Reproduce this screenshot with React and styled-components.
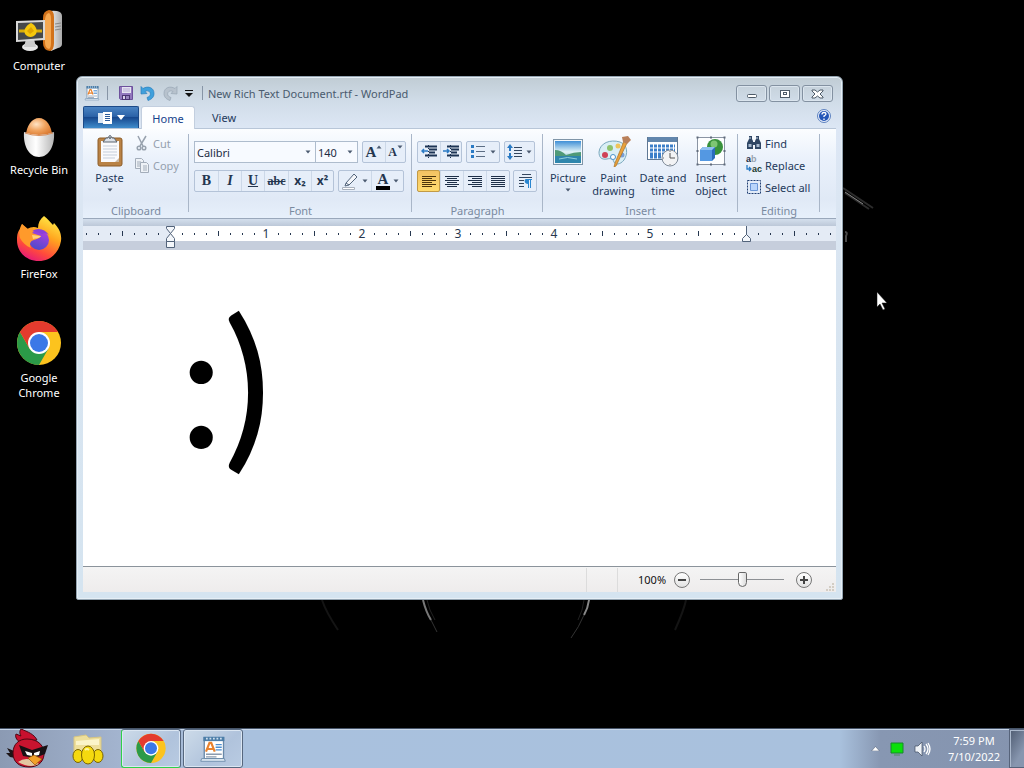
import React from "react";
import styled, { createGlobalStyle, css } from "styled-components";

const GlobalStyle = createGlobalStyle`
  * { box-sizing: border-box; }
  body {
    margin: 0;
    background: #000;
    font-family: "Noto Sans", "Open Sans", sans-serif;
    font-size: 11px;
    line-height: 13px;
    color: #1e395b;
  }
  button, input, select { font: inherit; color: inherit; margin: 0; }
  button { padding: 0; border: 0; background: none; }
`;

/* ---------- desktop ---------- */

const Screen = styled.div`
  min-height: 100vh;
  display: grid;
  grid-template-rows: 1fr auto;
  background: #000;
`;

const Desktop = styled.main`
  position: relative;
  overflow: hidden;
`;

const Wallpaper = styled.svg`
  position: absolute;
  left: 0;
  top: 0;
  width: 100%;
  height: 100%;
`;

const Shortcuts = styled.nav`
  position: relative;
  display: flex;
  flex-direction: column;
  width: 78px;
`;

const Shortcut = styled.a`
  height: 104px;
  padding-top: 8px;
  display: flex;
  flex-direction: column;
  align-items: center;
  gap: 2px;
  color: #fff;
  line-height: 15px;
  text-align: center;
  text-decoration: none;
`;

const Pointer = styled.svg`
  position: absolute;
  left: 876px;
  top: 291px;
`;

/* ---------- window frame ---------- */

const AppWindow = styled.section`
  position: absolute;
  left: 76px;
  top: 76px;
  width: calc(100% - 257px);
  height: calc(100% - 204px);
  padding: 0 6px 7px;
  display: flex;
  flex-direction: column;
  border: 1px solid #93a3b0;
  border-radius: 6px 6px 2px 2px;
  background: linear-gradient(#c0ccd4, #d0dce8 24px, #dde7f5 52px, #d9e5f1 200px, #d5e4f0);
  box-shadow: inset 0 0 0 1px #e6eff6;
`;

const TitleBar = styled.header`
  height: 29px;
  flex: none;
  padding: 6px 3px 0 1px;
  display: flex;
  align-items: flex-start;
`;

const QuickAccess = styled.div`
  height: 20px;
  display: flex;
  align-items: center;
`;

const QuickButton = styled.button`
  width: ${(p) => p.$w || 22}px;
  height: 20px;
  display: flex;
  align-items: center;
  justify-content: center;
`;

const Rule = styled.span`
  width: 1px;
  height: 14px;
  margin: 0 ${(p) => p.$gap}px;
  background: #8795a6;
`;

const Title = styled.h1`
  margin: 0;
  flex: 1;
  font-size: 11px;
  font-weight: 400;
  line-height: 22px;
  color: #4a5b6e;
`;

const Caption = styled.div`
  display: flex;
  gap: 2px;
  padding-top: 2px;
`;

const CaptionButton = styled.button`
  width: 31px;
  height: 17px;
  display: flex;
  align-items: center;
  justify-content: center;
  border: 1px solid #8391a1;
  border-radius: 3px;
  box-shadow: inset 0 0 0 1px #dbe5ee;
`;

const TabBar = styled.div`
  height: 22px;
  flex: none;
  display: flex;
  align-items: stretch;
`;

const FileButton = styled.button`
  width: 56px;
  display: flex;
  align-items: center;
  justify-content: center;
  gap: 5px;
  border: 1px solid #1c4a88;
  border-bottom: 0;
  border-radius: 2px 2px 0 0;
  background: linear-gradient(#4a83c2, #2c63a8 45%, #17488e 50%, #3f8ccc);
`;

const Tab = styled.button`
  width: 54px;
  margin-left: 2px;
  line-height: 21px;
  ${(p) =>
    p.$active &&
    css`
      position: relative;
      z-index: 1;
      margin-bottom: -1px;
      border: 1px solid #c3cfdf;
      border-bottom: 0;
      border-radius: 3px 3px 0 0;
      background: #fdfeff;
      color: #15428b;
    `}
`;

const HelpButton = styled.button`
  margin: 3px 5px 0 auto;
  align-self: flex-start;
  height: 15px;
`;

/* ---------- ribbon ---------- */

const Ribbon = styled.div`
  height: 91px;
  flex: none;
  display: flex;
  border-top: 1px solid #b8c6d8;
  border-bottom: 1px solid #9aa8bb;
  background: linear-gradient(#fbfdff, #eaf1fb 30px, #e0e9f6 70px, #e7f0fb);
`;

const Group = styled.section`
  width: ${(p) => p.$w}px;
  flex: none;
  padding-top: 3px;
  display: flex;
  flex-direction: column;
  justify-content: space-between;
  background: linear-gradient(#a9b6c8, #a9b6c8) right 5px / 1px 78px no-repeat;
`;

const GroupBody = styled.div`
  display: flex;
  padding: ${(p) => p.$pad || "0 4px"};
  flex-direction: ${(p) => (p.$stack ? "column" : "row")};
  gap: ${(p) => p.$gap || 0}px;
`;

const GroupName = styled.h2`
  margin: 0;
  font-size: 11px;
  font-weight: 400;
  line-height: 15px;
  text-align: center;
  color: #7a8aa0;
`;

const BigButton = styled.button`
  width: ${(p) => p.$w}px;
  flex: none;
  padding-top: 3px;
  display: flex;
  flex-direction: column;
  align-items: center;
  white-space: nowrap;

  > svg:first-child { margin-bottom: 4px; }
  > svg:last-child { margin-top: 4px; }
`;

const SmallButton = styled.button`
  height: 22px;
  display: flex;
  align-items: center;
  gap: 3px;
  white-space: nowrap;

  &:disabled { color: #94a0ae; }
`;

const Row = styled.div`
  display: flex;
  gap: ${(p) => p.$gap}px;
`;

const ComboPair = styled.div`
  display: flex;
  width: 164px;
`;

const Combo = styled.label`
  position: relative;
  width: ${(p) => p.$w}px;
  height: 22px;
  margin-right: ${(p) => (p.$joined ? -1 : 0)}px;

  > svg {
    position: absolute;
    right: 5px;
    top: 9px;
    pointer-events: none;
  }
`;

const Select = styled.select`
  width: 100%;
  height: 100%;
  padding: 0 2px;
  appearance: none;
  border: 1px solid #aebccd;
  border-radius: 0;
  background: #f7faff;
  color: #1c2c44;
`;

const ToolGroup = styled.div`
  height: 22px;
  display: flex;
  border: 1px solid #b4c3d8;
  border-radius: 2px;
  background: #e6eef9;
`;

const Tool = styled.button`
  width: ${(p) => p.$w || 24}px;
  height: 20px;
  display: flex;
  align-items: center;
  justify-content: center;
  gap: ${(p) => (p.$tight ? 0 : 3)}px;
  & + & { border-left: 1px solid #ccd8e8; }
  ${(p) =>
    p.$tight &&
    css`
      > svg { align-self: flex-start; margin-top: 3px; }
    `}
  ${(p) =>
    p.$on &&
    css`
      height: 22px;
      margin: -1px 0 -1px -1px;
      border: 1px solid #c29a45;
      border-radius: 2px;
      background: linear-gradient(#f3c263, #ffdb6e);
    `}
`;

const Glyph = styled.span`
  font-family: "Liberation Serif", serif;
  font-size: ${(p) => p.$size || 14}px;
  line-height: ${(p) => (p.$bar ? 13 : 18)}px;
  font-weight: 700;
  font-style: ${(p) => (p.$italic ? "italic" : "normal")};
  text-decoration: ${(p) => p.$line || "none"};
  color: #24364f;
  ${(p) =>
    p.$sans &&
    css`
      font-family: "Noto Sans", sans-serif;
    `}
  ${(p) =>
    p.$bar &&
    css`
      padding: 0 2px;
      border-bottom: 4px solid #000;
    `}
`;

/* ---------- document ---------- */

const RulerStrip = styled.div`
  height: 31px;
  flex: none;
  padding-top: 7px;
  background: linear-gradient(#d4dfed, #bcc8d8 7px);
`;

const RulerDrawing = styled.svg`
  display: block;
  width: 100%;
  height: 24px;
  font-size: 12px;
`;

const Page = styled.article`
  flex: 1;
  min-height: 0;
  overflow: hidden;
  padding: 16px 96px;
  background: #fff;
  color: #000;
`;

const Paragraph = styled.p`
  margin: 0;
  font-family: Lato, sans-serif;
  font-weight: 500;
  font-size: 176px;
  line-height: 228px;
`;

const StatusBar = styled.footer`
  height: 26px;
  flex: none;
  display: flex;
  align-items: center;
  justify-content: flex-end;
  border-top: 1px solid #8b939b;
  background: linear-gradient(#f4f4f4, #eeecec);
  color: #111;
`;

const StatusCell = styled.div`
  width: 32px;
  height: 24px;
  border: solid #dcdcdc;
  border-width: 0 1px;
`;

const Zoom = styled.div`
  width: 218px;
  padding-left: 20px;
  display: flex;
  align-items: center;
`;

const ZoomValue = styled.output`
  width: 36px;
`;

const RoundButton = styled.button`
  width: 16px;
  height: 16px;
  display: flex;
  align-items: center;
  justify-content: center;
  border: 1px solid #777;
  border-radius: 50%;
  background: linear-gradient(#fff, #e2e2e2);
`;

const Slider = styled.input`
  width: 84px;
  height: 18px;
  margin: 0 12px 0 10px;
  appearance: none;
  background: none;

  &::-webkit-slider-runnable-track {
    height: 1px;
    background: #8d9094;
  }
  &::-webkit-slider-thumb {
    appearance: none;
    width: 9px;
    height: 15px;
    margin-top: -7px;
    border: 1px solid #666;
    border-radius: 2px 2px 5px 5px;
    background: linear-gradient(90deg, #fff, #dcdcdc);
  }
`;

const Grip = styled.svg`
  margin: 14px 2px 0 auto;
`;

/* ---------- taskbar ---------- */

const Taskbar = styled.footer`
  height: 40px;
  position: relative;
  display: flex;
  align-items: stretch;
  border-top: 1px solid #465468;
  background: linear-gradient(90deg, #8b9ab3, #a3b4cf 120px, #a9c1de 240px, #a9c1dd 82%, #8797b2 86%, #8594af);
  box-shadow: inset 0 1px 0 #c6d5e8;
`;

const TaskButton = styled.button`
  width: ${(p) => p.$w || 60}px;
  display: flex;
  align-items: center;
  justify-content: center;
  ${(p) =>
    p.$running &&
    css`
      margin: 0 2px 0 0;
      border: 1px solid #56677e;
      border-radius: 3px;
      box-shadow: inset 0 0 0 1px #dbe6f2;
      background: linear-gradient(135deg, #cddbe9, #b0c3dc 60%, #b9cbe2);
    `}
  ${(p) =>
    p.$accent &&
    css`
      border-left-color: ${p.$accent};
      border-bottom-color: ${p.$accent};
    `}
`;

const Tray = styled.div`
  margin-left: auto;
  display: flex;
  align-items: center;
  gap: 10px;
  color: #fff;
`;

const Clock = styled.time`
  width: 66px;
  text-align: center;
  line-height: 16px;
`;

const ShowDesktop = styled.button`
  width: 15px;
  height: 39px;
  margin-left: -8px;
  border: 1px solid #56637a;
  border-right: 0;
  box-shadow: inset 1px 1px 0 #aab8cc;
  background: linear-gradient(120deg, #4f5c72, #8796af 70%);
`;

/* ---------- drawings ---------- */

const Caret = ({ up }) => (
  <svg width="6" height="4" viewBox="0 0 6 4"><path d={up ? "M0.500 3.500h5L3 .5z" : "M0.500 0.500h5L3 3.500z"} fill="#4b5a70" /></svg>
);

const ComputerIcon = () => (
  <svg width="48" height="48" viewBox="0 0 48 48">
    <defs>
      <linearGradient id="tower"><stop offset="0" stopColor="#fafafa" /><stop offset="1" stopColor="#aaa" /></linearGradient>
    </defs>
    <path d="M33 4 Q36 2 42 3 Q47 4 47 8V36q0 3-4 4l-7 3z" fill="url(#tower)" />
    <path d="M28 10q0-7 6-8 5 0 5 7v26q0 7-4 8-7-1-7-8z" fill="#d2721a" />
    <path d="M30 11q1-6 4-6 2 1 2 6v24q0 5-2 6-4-1-4-7z" fill="#f5a850" />
    <path d="M40 16l6-1M40 19l6-1M40 22l6-1" stroke="#888" />
    <ellipse cx="15" cy="39" rx="8" ry="4" fill="#e8e8e8" />
    <path d="M11 31h8l2 8H9z" fill="#ccc" />
    <path d="M1 13l29 -1v20L1 34z" fill="#d9d9d9" />
    <path d="M3 15l25-1v16L3 32z" fill="#45484a" />
    <path d="M4 23h23" stroke="#d9ae0a" strokeWidth="3" />
    <path d="M16 15c4 2 7 6 5 11-3 4-8 4-11 0-2-5 2-9 6-11z" fill="#f5c70c" />
    <path d="M12 23l4-4 3 4-4 3z" fill="#e0a500" />
  </svg>
);

const RecycleIcon = () => (
  <svg width="48" height="48" viewBox="0 0 48 48">
    <defs>
      <radialGradient id="egg" cx="0.4" cy="0.35" r="0.7"><stop offset="0" stopColor="#ffe3c4" /><stop offset="0.5" stopColor="#f0a35f" /><stop offset="1" stopColor="#d9762c" /></radialGradient>
      <linearGradient id="cup"><stop offset="0" stopColor="#ddd" /><stop offset="0.4" stopColor="#fff" /><stop offset="1" stopColor="#b5b5b5" /></linearGradient>
    </defs>
    <path d="M11 24c0-10 6-18 13-18s13 8 13 18z" fill="url(#egg)" />
    <path d="M9 20q15 6 30 0c1 14-5 25-15 25S8 34 9 20z" fill="url(#cup)" />
    <path d="M10 21q14 5 28 0" stroke="#d98f5d" fill="none" />
  </svg>
);

const FirefoxIcon = () => (
  <svg width="48" height="48" viewBox="0 0 48 48">
    <defs>
      <linearGradient id="fox" x1="0.8" y1="0" x2="0.3" y2="1"><stop offset="0" stopColor="#fff04a" /><stop offset="0.4" stopColor="#ffa51f" /><stop offset="0.75" stopColor="#ff4a3c" /><stop offset="1" stopColor="#e5197a" /></linearGradient>
      <linearGradient id="globe" x1="0.7" y1="0" x2="0.3" y2="1"><stop offset="0" stopColor="#b13fe0" /><stop offset="1" stopColor="#4a4bc9" /></linearGradient>
    </defs>
    <path d="M29 0c4 3 6 6 9 9l1-2c5 5 8 11 7 18-2 12-11 20-22 20C11 45 2 36 2 24c0-6 1-9 4-12l1-4 5 5c4-2 7-3 11-1 0-5 2-9 6-12z" fill="url(#fox)" />
    <circle cx="24" cy="24" r="10" fill="url(#globe)" />
    <path d="M17 15c6-4 13-2 17 4-3-2-5-2-7-1z" fill="#8b3fd9" />
    <path d="M7 8l6 5 5-1-1 5 9 3c-2 3-5 3-7 4-4 1-5 4-3 8-5-2-9-6-11-10-1-5-1-9 2-14z" fill="#ff9a2b" />
    <path d="M17 19l9 1c-2 3-5 2-8 3z" fill="#ffd27a" />
  </svg>
);

const ChromeIcon = ({ size = 48 }) => (
  <svg width={size} height={size} viewBox="0 0 48 48">
    <circle cx="24" cy="23" r="22" fill="#fcc31e" />
    <path d="M24 23 5 12A22 22 0 0 1 43 12H24z" fill="#e33b2e" />
    <path d="M5 12A22 22 0 0 0 24 45L33.500 28.500 24 33 14.500 28.500z" fill="#2b9a48" />
    <path d="M5 12 14.500 28.500 24 23 24 12z" fill="#e33b2e" />
    <circle cx="24" cy="23" r="11" fill="#fff" />
    <circle cx="24" cy="23" r="9" fill="#3b78e7" />
  </svg>
);

const WordPadIcon = ({ size = 16 }) => (
  <svg width={size} height={size} viewBox="0 0 32 32">
    <path d="M6 3h22v24H6z" fill="#fff" stroke="#6888a8" strokeWidth="1.500" />
    <path d="M5 2h24v5H5z" fill="#4d7ea8" />
    <path d="M8 4h2m2 0h2m2 0h2m2 0h2m2 0h2" stroke="#cfe0ee" strokeWidth="2" />
    <path d="M8 19l4-10h2l4 10M10 16h6" stroke="#e8822e" strokeWidth="2.500" fill="none" />
    <path d="M19 11h7M19 14h7M19 17h7" stroke="#4d8fd0" strokeWidth="1.500" />
    <path d="M8 22h18M8 25h12" stroke="#8a9aae" strokeWidth="1.500" />
    <path d="M3 27h26l1 3H2z" fill="#e3edf6" stroke="#6888a8" />
  </svg>
);

const SaveIcon = () => (
  <svg width="16" height="16" viewBox="0 0 16 16">
    <path d="M1.500 1.500h13v13h-12l-1-1z" fill="#9277bd" stroke="#6d519c" />
    <path d="M4 2h9v6H4z" fill="#e6e3f2" /><path d="M5 4h7M5 6h7" stroke="#b5aad2" />
    <path d="M4 10h8v5H4z" fill="#4b3472" /><path d="M5 11h2v3H5z" fill="#d8cfe9" /><path d="M8 11h3v3H8z" fill="#9883bd" />
  </svg>
);

const UndoIcon = ({ color = "#3fa0dc", edge = "#2b7fbd", flip }) => (
  <svg width="16" height="16" viewBox="0 0 16 16">
    <g transform={flip ? "matrix(-1 0 0 1 16 0)" : undefined}>
      <path d="M1 1.500l2 2c5-3 11-1 11 5 0 4-3 6-6 7l-1-3c3-1 4-3 3-5-1-2-3-2-5-1l2 2-6 .5z" fill={color} stroke={edge} strokeWidth="0.700" />
    </g>
  </svg>
);

const ClipboardIcon = () => (
  <svg width="26" height="32" viewBox="0 0 26 32">
    <rect x="1" y="3" width="24" height="28" rx="2" fill="#b98245" stroke="#8d5d28" />
    <path d="M4 6h18v21H4z" fill="#fafafc" /><path d="M18 27l4-4v4z" fill="#c9b8a3" />
    <path d="M6 11h14M6 14h14M6 17h14M6 20h14M6 23h12" stroke="#c5cedb" />
    <path d="M6 7l3-4h2q2-5 4 0h2l3 4z" fill="#dce1e8" stroke="#59636f" />
    <circle cx="13" cy="3" r="1" fill="#59636f" />
  </svg>
);

const CutIcon = () => (
  <svg width="16" height="16" viewBox="0 0 16 16" fill="none" stroke="#98a2ae" strokeWidth="1.500">
    <path d="M4 1l5 10M12 1L6 11" /><circle cx="5" cy="13" r="1.800" /><circle cx="10" cy="13" r="1.800" />
  </svg>
);

const CopyIcon = () => (
  <svg width="16" height="16" viewBox="0 0 16 16" fill="#eef2f7" stroke="#a3adba">
    <path d="M1.500 1.500h6l2 2v8h-8z" /><path d="M3 5h4M3 7h3M3 9h3" />
    <path d="M6.500 5.500h6l2 2v8h-8z" /><path d="M9 9h4M9 11h4M9 13h4" />
  </svg>
);

const IndentIcon = ({ right }) => (
  <svg width="17" height="16" viewBox="0 0 17 16" stroke="#1d3455" strokeWidth="1.500">
    <path d="M4 2.500h12M8 5.500h8M8 8.500h6M4 11.500h12" strokeWidth="2" /><path d="M7.500 1v14" strokeDasharray="1 2" strokeWidth="1" />
    <path d={right ? "M0 7h6M4 5l2 2-2 2" : "M1 7h6M3 5l-2 2 2 2"} fill="none" stroke="#2a7ac4" />
  </svg>
);

const ListIcon = () => (
  <svg width="16" height="16" viewBox="0 0 16 16">
    <path d="M0 1h3v3H0zM0 6h3v3H0zM0 11h3v3H0z" fill="#2a7ac4" /><path d="M5 2.500h9M5 7.500h9M5 12.500h9" stroke="#5b6d84" />
  </svg>
);

const SpacingIcon = () => (
  <svg width="16" height="16" viewBox="0 0 16 16">
    <path d="M3 0L0 4h2v3h2V4h2zM3 16l-3-4h2V9h2v3h2z" fill="#2a7ac4" /><path d="M7 3.500h8M7 6.500h8M7 9.500h8M7 12.500h8" stroke="#34475f" />
  </svg>
);

const alignRows = {
  left: "M1 2.500h14M1 4.500h10M1 6.500h14M1 8.500h10M1 10.500h14M1 12.500h10",
  center: "M1 2.500h14M3 4.500h10M1 6.500h14M3 8.500h10M1 10.500h14M3 12.500h10",
  right: "M1 2.500h14M5 4.500h10M1 6.500h14M5 8.500h10M1 10.500h14M5 12.500h10",
  justify: "M1 2.500h14M1 4.500h14M1 6.500h14M1 8.500h14M1 10.500h14M1 12.500h14",
};
const AlignIcon = ({ kind }) => (
  <svg width="16" height="15" viewBox="0 0 16 15"><path d={alignRows[kind]} stroke={kind === "left" ? "#4d350b" : "#1d2f48"} /></svg>
);

const ParagraphIcon = () => (
  <svg width="16" height="16" viewBox="0 0 16 16">
    <path d="M5 1.500h9M2 4.500h13M2 7.500h5M2 10.500h5M2 13.500h5" stroke="#34475f" />
    <path d="M9 6h6v1h-1v8h-1V7h-1v8h-1v-4c-4 0-4-5-2-5z" fill="#2a86d0" />
  </svg>
);

const HighlightIcon = () => (
  <svg width="17" height="17" viewBox="0 0 17 17" fill="#f4f6fa" stroke="#53657b">
    <path d="M4 10L12 1l3 3-8 8-4 1z" /><path d="M4 10l3 2" /><path d="M0.500 14.500h12v2H.5z" fill="#fff" stroke="#a9b1bd" />
  </svg>
);

const PictureIcon = () => (
  <svg width="30" height="32" viewBox="0 0 30 32">
    <defs><linearGradient id="sky" x2="0" y2="1"><stop offset="0" stopColor="#3f8fd6" /><stop offset="0.500" stopColor="#e2f4f7" /><stop offset="1" stopColor="#2e86ae" /></linearGradient></defs>
    <rect x="0.500" y="4.500" width="29" height="25" fill="#f4f8fb" stroke="#7f95a8" />
    <path d="M2 6h26v22H2z" fill="url(#sky)" />
    <path d="M2 15q6 0 11 5 8-3 15-3v5H2z" fill="#4f9a78" /><path d="M2 21h26v7H2z" fill="#2f86ac" /><path d="M6 24q8-3 18 0" stroke="#8fd0e0" fill="none" />
  </svg>
);

const PaintIcon = () => (
  <svg width="34" height="32" viewBox="0 0 34 32">
    <path d="M2 17C3 8 13 4 23 7c8 3 8 12 4 18-4 5-9 5-10 2s-3-4-7-3c-6 1-8-2-8-7z" fill="#d9eef5" stroke="#7aa8bd" />
    <circle cx="8" cy="20" r="3" fill="#cf4257" /><circle cx="13" cy="13" r="3" fill="#8ec26c" /><circle cx="21" cy="11" r="2.500" fill="#efc45a" /><circle cx="16" cy="22" r="2.500" fill="#fff" stroke="#4a92c9" /><circle cx="25" cy="20" r="2.500" fill="#7a9fd5" />
    <path d="M27 6l3 2-11 23-2 1 1-4z" fill="#e9a13c" stroke="#a9701f" strokeWidth="0.700" /><path d="M25 2l6-1 3 4-4 4-4-2z" fill="#b9805a" />
  </svg>
);

const CalendarIcon = () => (
  <svg width="32" height="32" viewBox="0 0 32 32">
    <rect x="0.500" y="2.500" width="30" height="22" fill="#fff" stroke="#5f7894" />
    <path d="M1 2h29v5H1z" fill="#6186ad" />
    <path d="M3 11h25M3 15h25M3 19h18M3 22h14" stroke="#3c7fc9" strokeWidth="3" strokeDasharray="3 1" />
    <circle cx="23" cy="23" r="8" fill="#f2f3f5" stroke="#7f8b99" /><path d="M23 18v5h5" stroke="#555" fill="none" /><path d="M23 16v1M23 29v1M16 23h1" stroke="#777" />
  </svg>
);

const ObjectIcon = () => (
  <svg width="32" height="32" viewBox="0 0 32 32">
    <path d="M2.500 2.500h27v27h-27z" fill="#fdfeff" stroke="#8a94a3" />
    <circle cx="20" cy="12" r="8" fill="#38913b" /><circle cx="19" cy="9" r="3.500" fill="#7ec673" />
    <path d="M5 15l3-3h12v11l-3 3H5z" fill="#2a6cbd" /><path d="M5 15h12v11H5z" fill="#5498e2" /><path d="M5 15l3-3h12l-3 3z" fill="#8fc0f1" />
    <path d="M1.500 1.500h2v2h-2zM28.500 1.500h2v2h-2zM1.500 28.500h2v2h-2zM28.500 28.500h2v2h-2zM15 1.500h2v2h-2zM1.500 15h2v2h-2zM28.500 15h2v2h-2zM15 28.500h2v2h-2z" fill="#606b7b" />
  </svg>
);

const FindIcon = () => (
  <svg width="16" height="16" viewBox="0 0 16 16">
    <path d="M3 1h3v3l1 2v8H1V8l2-4zM10 1h3v3l2 4v6H9V6l1-2zM6 7h4v3H6z" fill="#2f4664" />
    <path d="M2.500 9h3v3h-3zM10.500 9h3v3h-3z" fill="#a8bad0" /><path d="M4 2v2M11 2v2" stroke="#cdd8e6" />
  </svg>
);

const ReplaceArt = styled.svg`
  overflow: visible;
  font: 700 9px "Liberation Sans", sans-serif;
`;

const ReplaceIcon = () => (
  <ReplaceArt width="16" height="16" viewBox="0 0 16 16">
    <text x="0" y="5" fill="#1d2f48">a<tspan fill="#98a2ae">b</tspan></text>
    <text x="6" y="15" fill="#1d3b2f">ac</text>
    <path d="M1 8v4h4M3 10l2 2-2 2" fill="none" stroke="#2a7ac4" strokeWidth="1.300" />
  </ReplaceArt>
);

const SelectAllIcon = () => (
  <svg width="16" height="16" viewBox="0 0 16 16">
    <path d="M1.500 1.500h13v13h-13z" fill="none" stroke="#203f72" strokeDasharray="2 1" />
    <path d="M4.500 4.500h7v7h-7z" fill="#b9d5fb" stroke="#6a96d6" />
  </svg>
);

const BirdIcon = () => (
  <svg width="44" height="40" viewBox="0 0 44 40">
    <path d="M14 13C10 11 9 7 10 5l5 2C13 4 14 1 15 0c7 3 13 5 16 11z" fill="#c8102e" stroke="#4d0611" />
    <path d="M8 22l-7-3 3 5-4 0 4 4 5 1z" fill="#1d1416" />
    <path d="M7 24c0-9 6-14 14-14 12 0 18 8 17 16-1 8-7 12-15 12C13 38 7 33 7 24z" fill="#c9142f" stroke="#4d0611" />
    <path d="M12 33q9-7 21 2-9 5-21-2z" fill="#e3c7a1" />
    <path d="M13 16l13 5 16-5-3 9-10 4-12-2z" fill="#181114" />
    <path d="M19 22l7 2v3l-5-1zM28 24l6-2-1 4-5 1z" fill="#fff" />
    <path d="M22 29l6-3 8 4-7 6z" fill="#f2a12a" stroke="#8d4e08" strokeWidth="0.700" />
  </svg>
);

const EggFolderIcon = () => (
  <svg width="32" height="32" viewBox="0 0 32 32">
    <path d="M2 4l12-2 3 3 12-1v22H2z" fill="#eedf9b" stroke="#d8c682" /><path d="M4 8l23-2v6H4z" fill="#fbf4c9" />
    <g fill="#f5d90f" stroke="#7a6300"><ellipse cx="6" cy="23" rx="5" ry="6.500" /><ellipse cx="26" cy="23" rx="5" ry="6.500" /><ellipse cx="16" cy="22" rx="6.500" ry="9" /></g>
    <path d="M13 17q2-2 4 0" stroke="#fff7a0" strokeWidth="2" fill="none" />
  </svg>
);

const SpeakerIcon = () => (
  <svg width="17" height="16" viewBox="0 0 17 16" fill="none" stroke="#fff">
    <path d="M1 5h3l4-4v14l-4-4H1z" fill="#eef2f7" stroke="#3d4a5e" strokeWidth="0.700" /><path d="M10 5q2 3 0 6M12 3q4 5 0 10M14 2q4 6 0 12" strokeWidth="1.300" />
  </svg>
);

/* The ruler counts inches of 96px from the left margin marker at x=87. */
const Ruler = () => {
  const ticks = [];
  for (let i = -7; i < 120; i += 1) {
    if (i === 0 || (i % 8 === 0 && i < 48) || i === 48) continue;
    ticks.push(
      <rect key={i} x={87 + i * 12} y={i % 4 ? 7 : 5} width="1" height={i % 4 ? 2 : 5} fill="#26374f" />
    );
  }
  return (
    <RulerStrip>
      <RulerDrawing role="img" aria-label="Ruler">
        <rect width="100%" height="15" fill="#e4ebf5" />
        <rect x="88" width="575" height="15" fill="#fff" />
        <rect y="15" width="100%" height="9" fill="#c6cedc" />
        {ticks}
        {[1, 2, 3, 4, 5].map((n) => (
          <text key={n} x={87 + n * 96} y="12" textAnchor="middle" fill="#26374f">{n}</text>
        ))}
        <g fill="#f4f7fb" stroke="#52637a">
          <path d="M83.500 .5h8v2l-4 5-4-5zM87.500 7.500l4 5v3h-8v-3zM83.500 15.500h8v6h-8z" />
          <path d="M663.500 0v9M663.500 8.500l4 4v3h-8v-3z" />
        </g>
      </RulerDrawing>
    </RulerStrip>
  );
};

const WordPad = () => (
  <AppWindow aria-label="WordPad">
    <TitleBar>
      <QuickAccess>
        <QuickButton $w={16} aria-label="WordPad"><WordPadIcon /></QuickButton>
        <Rule $gap={7} />
        <QuickButton aria-label="Save"><SaveIcon /></QuickButton>
        <QuickButton aria-label="Undo"><UndoIcon /></QuickButton>
        <QuickButton aria-label="Redo"><UndoIcon flip color="#b7c2cd" edge="#98a6b4" /></QuickButton>
        <QuickButton $w={16} aria-label="Customize">
          <svg width="8" height="8" viewBox="0 0 8 8"><path d="M0 1.500h8" stroke="#111" /><path d="M0 4h8L4 8z" fill="#111" /></svg>
        </QuickButton>
        <Rule $gap={5} />
      </QuickAccess>
      <Title>New Rich Text Document.rtf - WordPad</Title>
      <Caption>
        <CaptionButton aria-label="Minimize">
          <svg width="12" height="10" viewBox="0 0 12 10"><rect x="1.500" y="5.500" width="9" height="3" rx="1" fill="#fff" stroke="#4d5a68" /></svg>
        </CaptionButton>
        <CaptionButton aria-label="Maximize">
          <svg width="12" height="10" viewBox="0 0 12 10" fill="#fff" stroke="#4d5a68"><rect x="1.500" y="1.500" width="9" height="7" /><rect x="4.500" y="3.500" width="3" height="2" /></svg>
        </CaptionButton>
        <CaptionButton aria-label="Close">
          <svg width="13" height="10" viewBox="0 0 13 10"><path d="M1 1h3l2.500 2L9 1h3v1L9 5l3 3v1H9L6.500 7 4 9H1V8l3-3-3-3z" fill="#fff" stroke="#4d5a68" /></svg>
        </CaptionButton>
      </Caption>
    </TitleBar>
    <TabBar>
      <FileButton aria-label="WordPad menu">
        <svg width="14" height="12" viewBox="0 0 14 12"><path d="M0 1h5v10H0z" fill="#dbe7f5" /><path d="M5 0h9v12H5z" fill="#fff" /><path d="M7 2.500h5M7 4.500h5M7 6.500h5M7 8.500h5" stroke="#2d5c9b" /></svg>
        <svg width="8" height="5" viewBox="0 0 8 5"><path d="M0 0h8L4 5z" fill="#fff" /></svg>
      </FileButton>
      <Tab $active>Home</Tab>
      <Tab>View</Tab>
      <HelpButton aria-label="Help">
        <svg width="14" height="14" viewBox="0 0 14 14"><circle cx="7" cy="7" r="6.500" fill="#e6edf8" stroke="#5d82c0" /><circle cx="7" cy="7" r="5" fill="#2456b8" /><path d="M5 5.500q0-2 2-2t2 1.500q0 1-2 2v1M7 9.500v1.500" fill="none" stroke="#fff" strokeWidth="1.300" /></svg>
      </HelpButton>
    </TabBar>

    <Ribbon>
      <Group $w={106}>
        <GroupBody $gap={2}>
          <BigButton $w={45}><ClipboardIcon />Paste<Caret /></BigButton>
          <div>
            <SmallButton disabled><CutIcon />Cut</SmallButton>
            <SmallButton disabled><CopyIcon />Copy</SmallButton>
          </div>
        </GroupBody>
        <GroupName>Clipboard</GroupName>
      </Group>

      <Group $w={223}>
        <GroupBody $stack $pad="9px 5px 0" $gap={7}>
          <Row $gap={4}>
            <ComboPair>
              <Combo $w={122} $joined>
                <Select aria-label="Font family" defaultValue="Calibri"><option>Calibri</option></Select><Caret />
              </Combo>
              <Combo $w={43}>
                <Select aria-label="Font size" defaultValue="140"><option>140</option></Select><Caret />
              </Combo>
            </ComboPair>
            <ToolGroup>
              <Tool $w={22} $tight aria-label="Grow font"><Glyph $size={15}>A</Glyph><Caret up /></Tool>
              <Tool $w={20} $tight aria-label="Shrink font"><Glyph $size={12}>A</Glyph><Caret /></Tool>
            </ToolGroup>
          </Row>
          <Row $gap={4}>
            <ToolGroup>
              <Tool $w={23} aria-label="Bold"><Glyph>B</Glyph></Tool>
              <Tool $w={23} aria-label="Italic"><Glyph $italic>I</Glyph></Tool>
              <Tool $w={23} aria-label="Underline"><Glyph $line="underline">U</Glyph></Tool>
              <Tool $w={24} aria-label="Strikethrough"><Glyph $size={12} $line="line-through">abc</Glyph></Tool>
              <Tool $w={23} aria-label="Subscript"><Glyph $sans $size={12}>x₂</Glyph></Tool>
              <Tool $w={22} aria-label="Superscript"><Glyph $sans $size={12}>x²</Glyph></Tool>
            </ToolGroup>
            <ToolGroup>
              <Tool $w={32} aria-label="Text highlight color"><HighlightIcon /><Caret /></Tool>
              <Tool $w={32} aria-label="Text color"><Glyph $size={15} $bar>A</Glyph><Caret /></Tool>
            </ToolGroup>
          </Row>
        </GroupBody>
        <GroupName>Font</GroupName>
      </Group>

      <Group $w={131}>
        <GroupBody $stack $pad="9px 5px 0" $gap={7}>
          <Row $gap={4}>
            <ToolGroup>
              <Tool $w={22} aria-label="Decrease indent"><IndentIcon /></Tool>
              <Tool $w={21} aria-label="Increase indent"><IndentIcon right /></Tool>
            </ToolGroup>
            <ToolGroup><Tool $w={32} aria-label="Start a list"><ListIcon /><Caret /></Tool></ToolGroup>
            <ToolGroup><Tool $w={29} aria-label="Line spacing"><SpacingIcon /><Caret /></Tool></ToolGroup>
          </Row>
          <Row $gap={3}>
            <ToolGroup>
              <Tool $w={23} $on aria-label="Align left"><AlignIcon kind="left" /></Tool>
              <Tool $w={23} aria-label="Center"><AlignIcon kind="center" /></Tool>
              <Tool $w={23} aria-label="Align right"><AlignIcon kind="right" /></Tool>
              <Tool $w={23} aria-label="Justify"><AlignIcon kind="justify" /></Tool>
            </ToolGroup>
            <ToolGroup><Tool $w={22} aria-label="Paragraph"><ParagraphIcon /></Tool></ToolGroup>
          </Row>
        </GroupBody>
        <GroupName>Paragraph</GroupName>
      </Group>

      <Group $w={195}>
        <GroupBody $pad="0 2px">
          <BigButton $w={46}><PictureIcon />Picture<Caret /></BigButton>
          <BigButton $w={45}><PaintIcon /><span>Paint<br />drawing</span></BigButton>
          <BigButton $w={54}><CalendarIcon /><span>Date and<br />time</span></BigButton>
          <BigButton $w={42}><ObjectIcon /><span>Insert<br />object</span></BigButton>
        </GroupBody>
        <GroupName>Insert</GroupName>
      </Group>

      <Group $w={82}>
        <GroupBody $stack $pad="0 8px">
          <SmallButton><FindIcon />Find</SmallButton>
          <SmallButton><ReplaceIcon />Replace</SmallButton>
          <SmallButton><SelectAllIcon />Select all</SmallButton>
        </GroupBody>
        <GroupName>Editing</GroupName>
      </Group>
    </Ribbon>

    <Ruler />
    <Page><Paragraph>:)</Paragraph></Page>

    <StatusBar>
      <StatusCell />
      <Zoom>
        <ZoomValue>100%</ZoomValue>
        <RoundButton aria-label="Zoom out"><svg width="10" height="10"><path d="M1 5h8" stroke="#444" strokeWidth="2" /></svg></RoundButton>
        <Slider type="range" min="0" max="100" defaultValue="50" aria-label="Zoom" />
        <RoundButton aria-label="Zoom in"><svg width="10" height="10"><path d="M1 5h8M5 1v8" stroke="#444" strokeWidth="2" /></svg></RoundButton>
        <Grip width="8" height="8"><path d="M6 0h2v2H6zM3 3h2v2H3zM6 3h2v2H6zM0 6h2v2H0zM3 6h2v2H3zM6 6h2v2H6z" fill="#d3cdc4" /></Grip>
      </Zoom>
    </StatusBar>
  </AppWindow>
);

export default function App() {
  return (
    <Screen>
      <GlobalStyle />
      <Desktop>
        <Wallpaper aria-hidden="true" fill="none">
          <path d="M843 188l30 20M845 193l24 16" stroke="#2c2c2c" strokeWidth="2" />
          <path d="M845 192l18 12" stroke="#888" />
          <path d="M845 232q3 0 1 4v6" stroke="#4a4a4a" strokeWidth="2" />
          <path d="M322 600q4 12 16 30M686 600q-2 10-11 30" stroke="#141414" strokeWidth="2" />
          <path d="M423 600q3 12 8 20" stroke="#777" strokeWidth="2" /><path d="M431 620l6 12" stroke="#333" /><path d="M427 600q2 10 8 20" stroke="#222" />
          <path d="M589 600q-1 8-5 15" stroke="#888" strokeWidth="2" /><path d="M584 615q-5 12-13 23" stroke="#333" /><path d="M584 600q-1 10-6 20" stroke="#222" />
        </Wallpaper>
        <Shortcuts aria-label="Desktop">
          <Shortcut href="#computer"><ComputerIcon />Computer</Shortcut>
          <Shortcut href="#recycle"><RecycleIcon />Recycle Bin</Shortcut>
          <Shortcut href="#firefox"><FirefoxIcon />FireFox</Shortcut>
          <Shortcut href="#chrome"><ChromeIcon /><span>Google<br />Chrome</span></Shortcut>
        </Shortcuts>
        <WordPad />
        <Pointer width="14" height="20" viewBox="0 0 14 20"><path d="M1 1v15l3-3 3 6 2-1-3-6h5z" fill="#fff" stroke="#111" strokeWidth="0.500" /></Pointer>
      </Desktop>
      <Taskbar>
        <TaskButton $w={55} aria-label="Start"><BirdIcon /></TaskButton>
        <TaskButton $w={66} aria-label="Explorer"><EggFolderIcon /></TaskButton>
        <TaskButton $running $accent="#2fd04a" aria-label="Google Chrome"><ChromeIcon size={32} /></TaskButton>
        <TaskButton $running aria-label="WordPad"><WordPadIcon size={28} /></TaskButton>
        <Tray>
          <svg width="9" height="5" viewBox="0 0 9 5"><path d="M0.500 5L4.500 0.500 8.500 5z" fill="#fff" stroke="#45536a" strokeWidth="0.500" /></svg>
          <svg width="14" height="14" viewBox="0 0 14 14"><path d="M1 1h12v10H1z" fill="#0be00b" stroke="#178a2a" /><path d="M4 13h6" stroke="#4f8a62" /></svg>
          <SpeakerIcon />
          <Clock>7:59 PM<br />7/10/2022</Clock>
          <ShowDesktop aria-label="Show desktop" />
        </Tray>
      </Taskbar>
    </Screen>
  );
}
